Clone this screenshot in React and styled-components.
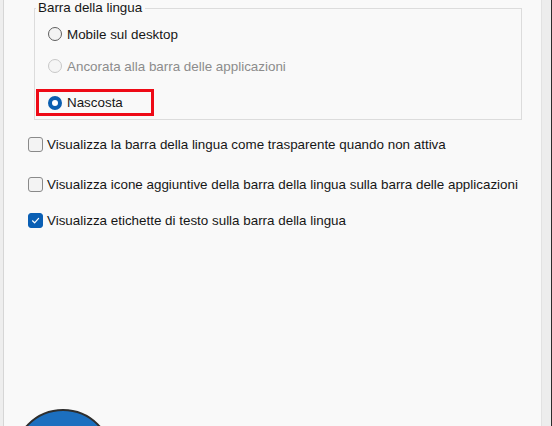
import React from "react";
import styled, { createGlobalStyle } from "styled-components";

const Global = createGlobalStyle`
  html, body { margin: 0; padding: 0; background: #f9f9f9; }
  body { font-family: "Liberation Sans", Arial, sans-serif; }
`;

const Frame = styled.div`
  display: flex;
  width: 552px;
  height: 426px;
  overflow: hidden;
  position: relative;
  background: #f9f9f9;
`;

const LeftEdge = styled.div`
  width: 3px;
  background: #eeeeee;
  border-right: 1px solid #d6d6d6;
  flex: none;
`;

const RightEdge = styled.div`
  width: 9px;
  flex: none;
  background: #ededed;
  border-left: 1px solid #e2e2e2;
  border-right: 1px solid #2b2b2b;
`;

const Main = styled.div`
  flex: 1;
  display: flex;
  flex-direction: column;
  padding: 0 0 0 24px;
  color: #161616;
  font-size: 13.4px;
`;

const Group = styled.fieldset`
  margin: 0 0 0 6px;
  width: 488px;
  box-sizing: border-box;
  border: 1px solid #dcdcdc;
  padding: 6px 0 3px 1px;
  display: flex;
  flex-direction: column;
  align-items: flex-start;
`;

const Legend = styled.legend`
  padding: 0 3px 0 2px;
  margin-left: 0;
  line-height: 16px;
  font-size: 13.4px;
  color: #161616;
`;

const RadioRow = styled.label`
  display: inline-flex;
  align-items: center;
  gap: 5px;
  height: ${p => p.$h || 24}px;
  margin-top: ${p => p.$mt || 0}px;
  padding: 0 8px 0 9px;
  box-sizing: border-box;
  border: 3px solid ${p => (p.$highlight ? "#ee0a16" : "transparent")};
  width: ${p => (p.$w ? `${p.$w}px` : "auto")};
  color: ${p => (p.$disabled ? "#8c8c8c" : "#161616")};
`;

const RadioDot = styled.span`
  width: 14px;
  height: 14px;
  box-sizing: border-box;
  border-radius: 50%;
  flex: none;
  border: ${p =>
    p.$checked ? "4px solid #0a5eb0" : `1px solid ${p.$disabled ? "#c8c8c8" : "#5f5f5f"}`};
  background: ${p => (p.$checked ? "#ffffff" : p.$disabled ? "#f5f5f5" : "#f3f3f3")};
`;

const CheckList = styled.div`
  display: flex;
  flex-direction: column;
  margin-top: 16px;
`;

const CheckRow = styled.label`
  display: flex;
  align-items: center;
  gap: 4px;
  height: 16px;
  margin-bottom: ${p => p.$mb || 0}px;
  white-space: nowrap;
`;

const Box = styled.span`
  width: 15px;
  height: 15px;
  box-sizing: border-box;
  border-radius: 3px;
  flex: none;
  display: flex;
  align-items: center;
  justify-content: center;
  border: 1px solid ${p => (p.$checked ? "#0a5fb4" : "#8a8a8a")};
  background: ${p => (p.$checked ? "#0a5fb4" : "#f3f3f3")};
`;

const Badge = styled.div`
  position: absolute;
  left: 13px;
  top: 409px;
  width: 100px;
  height: 100px;
  box-sizing: border-box;
  border-radius: 50%;
  border: 2px solid #2e2e2e;
  background: #1c6fbf;
`;

const Check = () => (
  <svg width="9" height="9" viewBox="0 0 9 9">
    <path d="M1.5 4.8 L3.6 6.8 L7.6 2.4" fill="none" stroke="#fff" strokeWidth="1.2" strokeLinecap="round" strokeLinejoin="round" />
  </svg>
);

export default function App() {
  return (
    <>
      <Global />
      <Frame>
        <LeftEdge />
        <Main>
          <Group>
            <Legend>Barra della lingua</Legend>
            <RadioRow>
              <RadioDot />
              Mobile sul desktop
            </RadioRow>
            <RadioRow $mt={8} $disabled>
              <RadioDot $disabled />
              Ancorata alla barra delle applicazioni
            </RadioRow>
            <RadioRow $mt={11} $h={27} $w={118} $highlight>
              <RadioDot $checked />
              Nascosta
            </RadioRow>
          </Group>
          <CheckList>
            <CheckRow $mb={24}>
              <Box />
              Visualizza la barra della lingua come trasparente quando non attiva
            </CheckRow>
            <CheckRow $mb={20}>
              <Box />
              Visualizza icone aggiuntive della barra della lingua sulla barra delle applicazioni
            </CheckRow>
            <CheckRow>
              <Box $checked>
                <Check />
              </Box>
              Visualizza etichette di testo sulla barra della lingua
            </CheckRow>
          </CheckList>
        </Main>
        <RightEdge />
        <Badge />
      </Frame>
    </>
  );
}
